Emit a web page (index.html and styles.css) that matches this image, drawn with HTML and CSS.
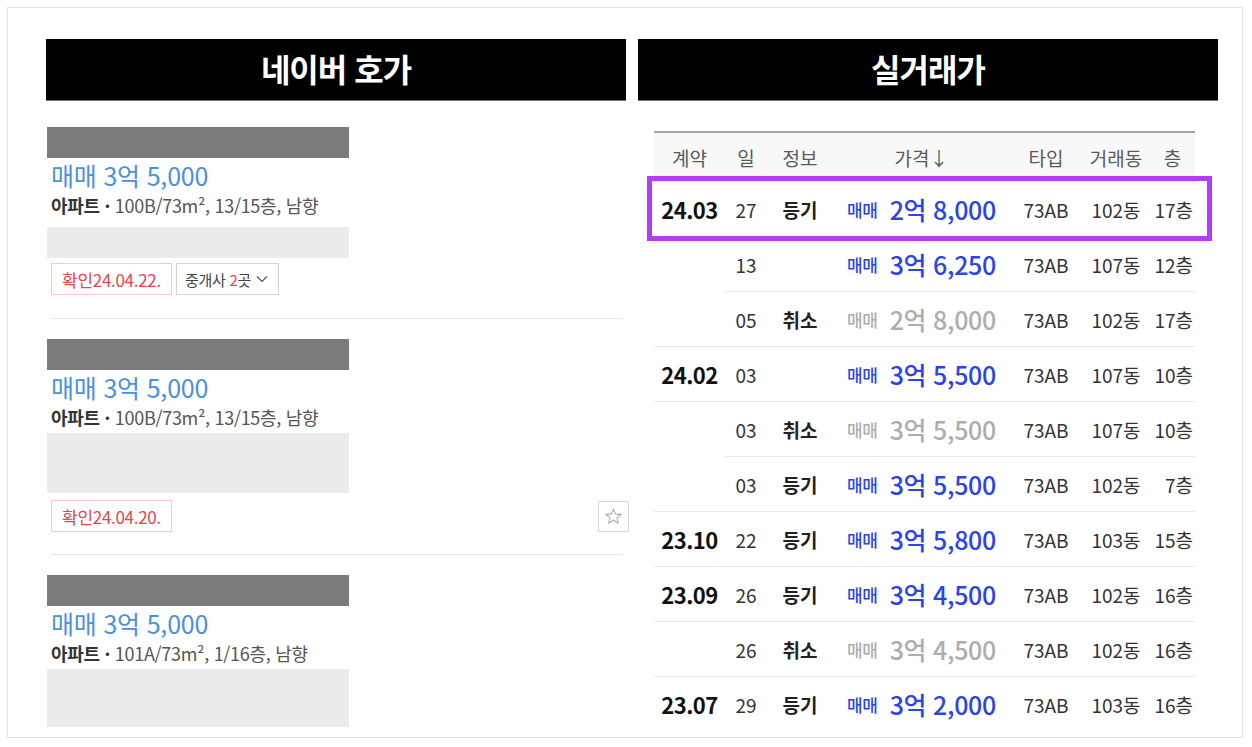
FILE: index.html
```html
<!DOCTYPE html>
<html lang="ko">
<head>
  <meta charset="UTF-8" />
  <meta name="viewport" content="width=device-width, initial-scale=1.0" />
  <title>네이버 호가 vs 실거래가</title>
  <link rel="stylesheet" href="styles.css">
</head>
<body>
  <div class="frame">
    <div class="col">
      <h2 class="col-title">네이버 호가</h2>

      <div class="listing">
        <div class="redact dark"></div>
        <div class="price">매매 3억 5,000</div>
        <div class="spec"><b>아파트 ·</b> 100B/73m², 13/15층, 남향</div>
        <div class="redact light first"></div>
        <div class="tags first">
          <span class="tag tag-confirm">확인24.04.22.</span>
          <span class="tag tag-agent">
            <span class="agent-label">중개사 <em>2</em>곳</span>
            <svg width="12" height="8" viewBox="0 0 12 8"><polyline points="1,1.5 6,6.5 11,1.5" fill="none" stroke="#555" stroke-width="1.2"/></svg>
          </span>
        </div>
      </div>
      <div class="divider"></div>

      <div class="listing">
        <div class="redact dark"></div>
        <div class="price">매매 3억 5,000</div>
        <div class="spec"><b>아파트 ·</b> 100B/73m², 13/15층, 남향</div>
        <div class="redact light tall"></div>
        <div class="tags second">
          <span class="tag tag-confirm">확인24.04.20.</span>
          <span class="star-btn">
            <svg width="19" height="19" viewBox="0 0 24 24"><polygon points="12,2.5 14.8,9 21.8,9.3 16.3,13.7 18.2,20.6 12,16.7 5.8,20.6 7.7,13.7 2.2,9.3 9.2,9" fill="none" stroke="#aaa" stroke-width="1.3" stroke-linejoin="round"/></svg>
          </span>
        </div>
      </div>
      <div class="divider short"></div>

      <div class="listing">
        <div class="redact dark"></div>
        <div class="price">매매 3억 5,000</div>
        <div class="spec"><b>아파트 ·</b> 101A/73m², 1/16층, 남향</div>
        <div class="redact light last"></div>
      </div>
    </div>

    <div class="col">
      <h2 class="col-title">실거래가</h2>

      <div class="deals">
        <div class="deal-row deal-head">
          <span>계약</span><span>일</span><span>정보</span><span>가격↓</span><span>타입</span><span>거래동</span><span class="floor">층</span>
        </div>

        <div class="deal-row">
          <span class="month">24.03</span><span>27</span><span class="info">등기</span>
          <span class="amount"><small>매매</small>2억 8,000</span><span>73AB</span><span>102동</span><span class="floor">17층</span>
        </div>
        <div class="deal-row sub">
          <span class="month"></span><span>13</span><span class="info"></span>
          <span class="amount"><small>매매</small>3억 6,250</span><span>73AB</span><span>107동</span><span class="floor">12층</span>
        </div>
        <div class="deal-row sub">
          <span class="month"></span><span>05</span><span class="info">취소</span>
          <span class="amount cancel"><small>매매</small>2억 8,000</span><span>73AB</span><span>102동</span><span class="floor">17층</span>
        </div>
        <div class="deal-row">
          <span class="month">24.02</span><span>03</span><span class="info"></span>
          <span class="amount"><small>매매</small>3억 5,500</span><span>73AB</span><span>107동</span><span class="floor">10층</span>
        </div>
        <div class="deal-row">
          <span class="month"></span><span>03</span><span class="info">취소</span>
          <span class="amount cancel"><small>매매</small>3억 5,500</span><span>73AB</span><span>107동</span><span class="floor">10층</span>
        </div>
        <div class="deal-row sub">
          <span class="month"></span><span>03</span><span class="info">등기</span>
          <span class="amount"><small>매매</small>3억 5,500</span><span>73AB</span><span>102동</span><span class="floor">7층</span>
        </div>
        <div class="deal-row">
          <span class="month">23.10</span><span>22</span><span class="info">등기</span>
          <span class="amount"><small>매매</small>3억 5,800</span><span>73AB</span><span>103동</span><span class="floor">15층</span>
        </div>
        <div class="deal-row">
          <span class="month">23.09</span><span>26</span><span class="info">등기</span>
          <span class="amount"><small>매매</small>3억 4,500</span><span>73AB</span><span>102동</span><span class="floor">16층</span>
        </div>
        <div class="deal-row">
          <span class="month"></span><span>26</span><span class="info">취소</span>
          <span class="amount cancel"><small>매매</small>3억 4,500</span><span>73AB</span><span>102동</span><span class="floor">16층</span>
        </div>
        <div class="deal-row">
          <span class="month">23.07</span><span>29</span><span class="info">등기</span>
          <span class="amount"><small>매매</small>3억 2,000</span><span>73AB</span><span>103동</span><span class="floor">16층</span>
        </div>

        <div class="highlight"></div>
      </div>
    </div>
  </div>
</body>
</html>
```

FILE: styles.css
```css
body {
  margin: 0;
  background-color: #fff;
  font-family: "Noto Sans CJK KR", "Noto Sans", sans-serif;
  color: #333;
}

.frame {
  box-sizing: border-box;
  margin: 7px 0 0 7px;
  width: 1236px;
  height: 731px;
  border: 1px solid #e2e2e2;
  padding: 31px 0 0 38px;
  display: flex;
  gap: 12px;
  overflow: hidden;
}

.col {
  width: 580px;
  flex: none;
}

.col-title {
  margin: 0;
  height: 62px;
  background-color: #000;
  color: #fff;
  font-size: 32px;
  font-weight: 700;
  letter-spacing: -1px;
  line-height: 58px;
  text-align: center;
  border-bottom: 1px solid #777;
  box-sizing: border-box;
}

/* 호가 목록 */

.listing:first-of-type {
  margin-top: 26px;
}

.listing {
  margin-top: 20px;
}

.redact {
  width: 302px;
  margin-left: 1px;
}

.redact.dark {
  height: 31px;
  background-color: #7b7b7b;
}

.redact.light {
  background-color: #ebebeb;
  margin-top: 3px;
}

.redact.light.first {
  height: 31px;
  margin-top: 9px;
}

.redact.light.tall {
  height: 60px;
}

.redact.light.last {
  height: 58px;
}

.price {
  padding-left: 5px;
  font-size: 25px;
  line-height: 34px;
  color: #4a90e2;
  letter-spacing: -0.2px;
}

.spec {
  padding-left: 5px;
  font-size: 18px;
  line-height: 26px;
  color: #555;
  letter-spacing: -0.3px;
}

.spec b {
  color: #333;
}

.tags {
  display: flex;
  align-items: center;
  gap: 4px;
  padding-left: 5px;
  height: 32px;
}

.tags.first {
  margin-top: 5px;
}

.tags.second {
  margin-top: 7px;
}

.tag {
  box-sizing: border-box;
  height: 32px;
  display: flex;
  align-items: center;
  padding: 0 7px;
  letter-spacing: -0.3px;
  white-space: nowrap;
}

.tag-confirm {
  width: 121px;
  border: 1px solid #f6c9cc;
  color: #e9434f;
  font-size: 17px;
  justify-content: center;
}

.tag-agent {
  width: 103px;
  gap: 5px;
  padding: 0 6px 0 8px;
  border: 1px solid #d4d4d4;
  color: #444;
  font-size: 15px;
}

.tag-agent em {
  font-style: normal;
  color: #e9434f;
}

.star-btn {
  box-sizing: border-box;
  width: 31px;
  height: 31px;
  margin-left: auto;
  margin-right: -3px;
  border: 1px solid #d8d8d8;
  display: flex;
  align-items: center;
  justify-content: center;
}

.divider {
  margin: 23px 0 0 5px;
  width: 572px;
  height: 1px;
  background-color: #e6e6e6;
}

.divider.short {
  margin-top: 22px;
}

/* 실거래가 표 */

.deals {
  position: relative;
  width: 541px;
  margin: 30px 0 0 16px;
  border-top: 2px solid #a8a8a8;
}

.deal-row {
  display: grid;
  grid-template-columns: 71px 42px 66px 177px 72px 68px 45px;
  height: 55px;
  font-size: 19px;
  color: #333;
}

.deal-row > span {
  display: flex;
  align-items: center;
  justify-content: center;
  border-top: 1px solid #e8e8e8;
  white-space: nowrap;
}

.deal-row.sub > span:first-child {
  border-top-color: transparent;
}

.deal-head {
  height: 48px;
  background-color: #f8f8f8;
  color: #5a5a5a;
}

.deal-head > span {
  border-top: none;
}

.deal-row > .floor {
  justify-content: flex-end;
  padding-right: 2px;
}

.deal-head > .floor {
  justify-content: center;
  padding-right: 0;
}

.month {
  font-size: 22px;
  font-weight: 700;
  color: #111;
  letter-spacing: -0.5px;
}

.info {
  font-weight: 700;
  color: #222;
}

.amount {
  font-size: 25px;
  font-weight: 500;
  color: #2a44e8;
  letter-spacing: -0.3px;
}

.amount small {
  font-size: 17px;
  margin-right: 12px;
}

.amount.cancel {
  color: #adadad;
}

.highlight {
  position: absolute;
  left: -7px;
  top: 43px;
  width: 565px;
  height: 65px;
  box-sizing: border-box;
  border: 5px solid #b53cf4;
  pointer-events: none;
}
```
